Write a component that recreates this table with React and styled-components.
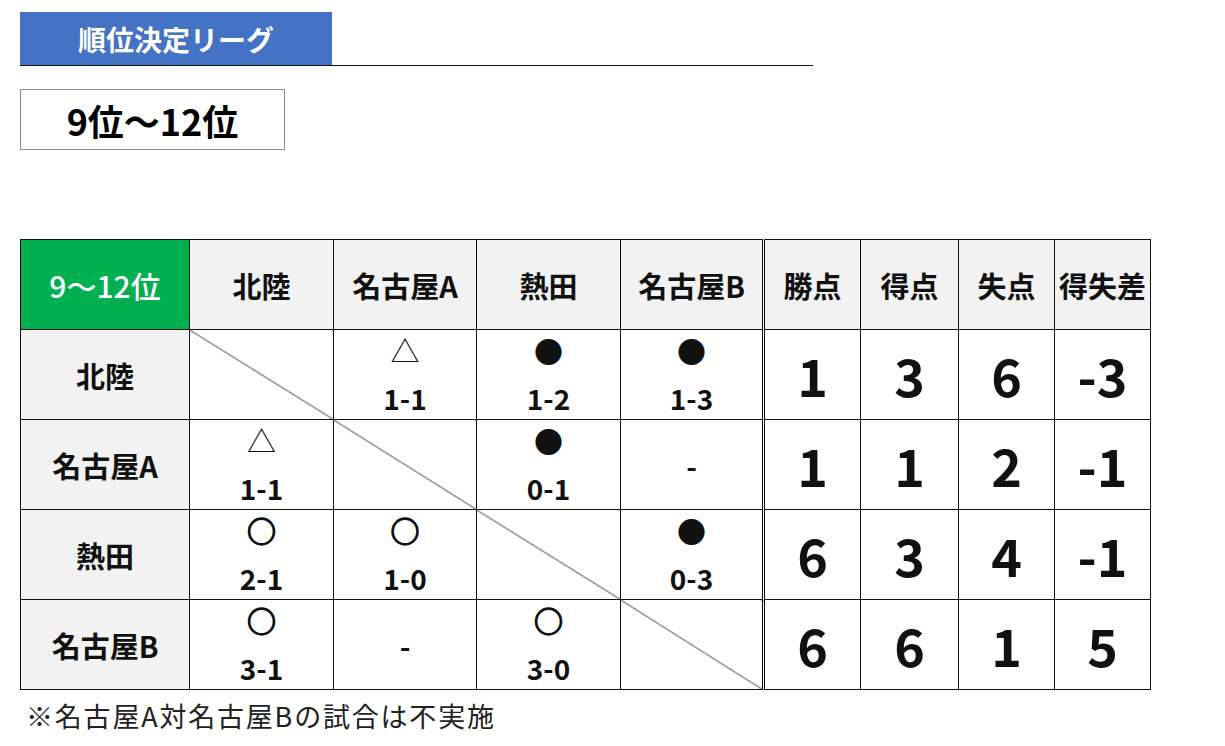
import React from "react";
import styled, { createGlobalStyle } from "styled-components";

const GlobalStyle = createGlobalStyle`
  body {
    margin: 0;
    background: #fff;
    font-family: "Noto Sans CJK JP", "Noto Sans", sans-serif;
    color: #111;
  }
`;

// --- レイアウト ---
const Page = styled.div`
  width: 1225px;
  height: 746px;
  padding: 12px 0 0 20px;
  box-sizing: border-box;
`;

const TitleRow = styled.div`
  width: 793px;
  border-bottom: 1px solid #111;
  display: flex;
`;

const TitleBar = styled.div`
  width: 312px;
  height: 53px;
  background: #4472c4;
  color: #fff;
  font-size: 28px;
  font-weight: 700;
  display: flex;
  align-items: center;
  justify-content: center;
`;

const RangeBox = styled.div`
  margin-top: 23px;
  width: 263px;
  height: 59px;
  border: 1px solid #8c8c8c;
  display: flex;
  align-items: center;
  justify-content: center;
  font-size: 36px;
  font-weight: 700;
  color: #000;
`;

const Table = styled.table`
  margin-top: 89px;
  border-collapse: collapse;
  table-layout: fixed;
  width: 1131px;
`;

const Cell = styled.td`
  border: 1px solid #111;
  height: 89px;
  padding: 0;
  text-align: center;
  vertical-align: middle;
  font-size: 29px;
  font-weight: 700;
  white-space: nowrap;
  background: ${({ $gray }) => ($gray ? "#f2f2f2" : "#fff")};
  ${({ $split }) => ($split ? "border-left: 3px double #111;" : "")}
`;

const CornerCell = styled(Cell)`
  background: #00b050;
  color: #fff;
  font-size: 30px;
  font-weight: 500;
`;

const DiagCell = styled(Cell)`
  background: linear-gradient(
    to top right,
    transparent calc(50% - 0.7px),
    #111 50%,
    transparent calc(50% + 0.7px)
  );
`;

const MatchBox = styled.div`
  height: 89px;
  display: flex;
  flex-direction: column;
  align-items: center;
  justify-content: space-between;
  padding: 2px 0 3px;
  box-sizing: border-box;
`;

const Mark = styled.span`
  font-size: 29px;
  font-weight: ${({ $thin }) => ($thin ? 400 : 700)};
  line-height: 36px;
  -webkit-text-stroke: ${({ $heavy }) => ($heavy ? "1.3px #111" : "0")};
`;

const Score = styled.span`
  font-size: 28px;
  line-height: 36px;
`;

const BigNum = styled(Cell)`
  font-size: 52px;
  font-weight: 700;
`;

const Note = styled.div`
  margin-top: 6px;
  margin-left: 6px;
  font-size: 27px;
  font-weight: 400;
  letter-spacing: 1.8px;
  color: #222;
`;

const teams = ["北陸", "名古屋A", "熱田", "名古屋B"];

// 対戦結果（null = 同チーム）
const results = [
  [null, ["△", "1-1"], ["●", "1-2"], ["●", "1-3"]],
  [["△", "1-1"], null, ["●", "0-1"], "-"],
  [["○", "2-1"], ["○", "1-0"], null, ["●", "0-3"]],
  [["○", "3-1"], "-", ["○", "3-0"], null],
];

const stats = [
  [1, 3, 6, -3],
  [1, 1, 2, -1],
  [6, 3, 4, -1],
  [6, 6, 1, 5],
];

const widths = [169, 144, 143, 144, 143, 97, 98, 96, 96];

const MatchCell = ({ value }) => {
  if (value === null) return <DiagCell />;
  if (typeof value === "string") return <Cell>{value}</Cell>;
  const [mark, score] = value;
  return (
    <Cell>
      <MatchBox>
        <Mark $thin={mark === "△"} $heavy={mark === "○"}>
          {mark}
        </Mark>
        <Score>{score}</Score>
      </MatchBox>
    </Cell>
  );
};

export default function App() {
  return (
    <Page>
      <GlobalStyle />
      <TitleRow>
        <TitleBar>順位決定リーグ</TitleBar>
      </TitleRow>
      <RangeBox>9位～12位</RangeBox>

      <Table>
        <colgroup>
          {widths.map((w, i) => (
            <col key={i} style={{ width: w }} />
          ))}
        </colgroup>
        <thead>
          <tr>
            <CornerCell as="th">9～12位</CornerCell>
            {teams.map((t) => (
              <Cell as="th" $gray key={t}>
                {t}
              </Cell>
            ))}
            <Cell as="th" $gray $split>勝点</Cell>
            <Cell as="th" $gray>得点</Cell>
            <Cell as="th" $gray>失点</Cell>
            <Cell as="th" $gray>得失差</Cell>
          </tr>
        </thead>
        <tbody>
          {teams.map((t, r) => (
            <tr key={t}>
              <Cell $gray>{t}</Cell>
              {results[r].map((v, c) => (
                <MatchCell key={c} value={v} />
              ))}
              {stats[r].map((n, c) => (
                <BigNum key={c} $split={c === 0}>
                  {n}
                </BigNum>
              ))}
            </tr>
          ))}
        </tbody>
      </Table>

      <Note>※名古屋A対名古屋Bの試合は不実施</Note>
    </Page>
  );
}
